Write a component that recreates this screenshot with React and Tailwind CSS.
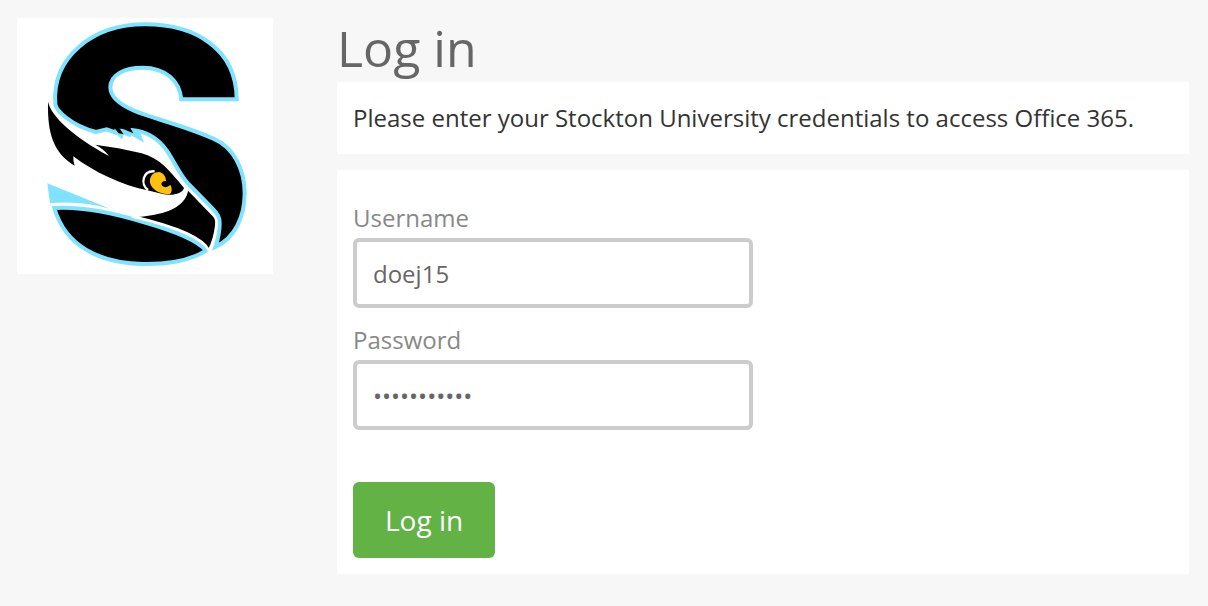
function OspreyLogo() {
  return (
    <svg viewBox="21 24 768 768" className="block w-full" role="img" aria-label="Stockton University">
      <g stroke="#7fe3ff" strokeWidth="12" strokeLinejoin="miter">
        <path d="M680 268C680 120 560 43 405 43C250 43 125 140 136 283C139 301 180 345 258 366L290 358L318 368L326 362L358 374L364 360C420 364 450 392 472 424C492 453 508 492 534 520L608 596Q631 618 629 640Q629 675 616 711C675 684 704 620 704 550C704 480 672 412 610 386C530 349 430 326 372 302C330 284 301 262 301 232C301 195 342 173 398 173C468 173 509 214 514 268Z" />
        <path d="M133 594C220 588 320 612 400 636C470 656 560 686 588 722C540 752 470 763 400 762C265 760 165 705 133 594Z" />
      </g>
      <path fill="#7fe3ff" d="M312 356L324 378L337 388L341 373L364 376L402 398L392 372L362 356Z" />
      <path d="M308 348L326 370L341 373L326 352L352 362L370 370L360 352Z" />
      <path fill="#7fe3ff" d="M112 520L300 596C240 580 180 574 120 580Z" />
      <path d="M114 275C124 320 190 380 297 438C286 422 272 412 256 404C300 410 350 418 395 430C450 444 482 486 522 534C518 552 485 558 458 552L412 541C335 526 250 485 190 439Q189 452 194 467C130 428 112 370 114 275Z" />
      <path fill="none" stroke="#fff" strokeWidth="7" d="M434 484C398 481 390 523 414 540" />
      <path fill="#ffc010" d="M448 486C428 486 418 500 420 518C425 540 450 552 479 553C488 545 486 533 481 524C474 532 464 534 457 528C450 519 458 513 468 513C468 500 461 490 448 486Z" />
      <path stroke="#fff" strokeWidth="8" d="M532 534L611 616Q622 627 619 646C616 674 608 700 597 722C580 682 487 647 366 619C440 613 524 600 532 534Z" />
    </svg>
  );
}

function Field({ id, label, type, value }) {
  return (
    <div className="flex w-full max-w-[400px] flex-col gap-1">
      <label htmlFor={id} className="text-2xl text-[#888888]">{label}</label>
      <input
        id={id}
        name={id}
        type={type}
        defaultValue={value}
        className="h-[70px] w-full rounded-md border-4 border-[#cccccc] bg-white px-4 text-2xl text-[#666666]"
      />
    </div>
  );
}

export default function App() {
  return (
    <div className="flex min-h-screen items-start gap-16 bg-[#f7f7f7] py-[18px] pr-[19px] pl-[17px] font-['Open_Sans',sans-serif]">
      <div className="w-64 shrink-0 bg-white">
        <OspreyLogo />
      </div>
      <main className="min-w-0 flex-1">
        <h1 className="pb-1 text-[50px] leading-[60px] font-normal text-[#666666]">Log in</h1>
        <p className="bg-white px-4 py-5 text-2xl text-[#333333]">
          Please enter your Stockton University credentials to access Office 365.
        </p>
        <form className="mt-4 flex flex-col gap-4 bg-white px-4 pt-8 pb-4" onSubmit={(e) => e.preventDefault()}>
          <Field id="username" label="Username" type="text" value="doej15" />
          <Field id="password" label="Password" type="password" value="password123" />
          <button type="submit" className="mt-9 h-[76px] self-start rounded-md bg-[#62b246] px-8 text-[28px] text-white">
            Log in
          </button>
        </form>
      </main>
    </div>
  );
}
